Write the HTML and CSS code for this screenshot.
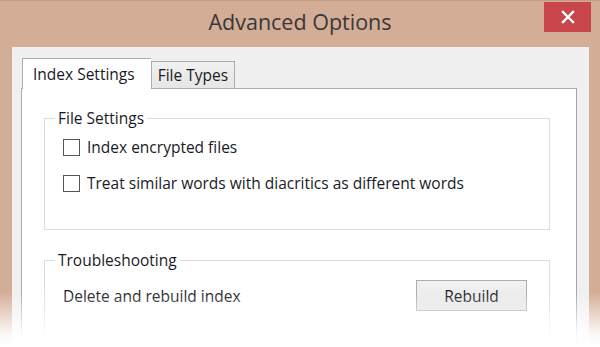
FILE: index.html
```html
<!DOCTYPE html>
<html>
<head>
<meta charset="utf-8">
<link rel="stylesheet" href="styles.css">
</head>
<body>
<div class="window">
  <div class="titlebar">
    <div></div>
    <div class="title">Advanced Options</div>
    <div class="close"><svg width="14" height="14" viewBox="0 0 14 14"><path d="M2 2L12 12M12 2L2 12" stroke="#fff" stroke-width="2.4" stroke-linecap="square"/></svg></div>
  </div>
  <div class="client">
    <div class="tabs">
      <div class="tab active">Index Settings</div>
      <div class="tab">File Types</div>
    </div>
    <div class="panel">
      <fieldset class="group group-files">
        <legend>File Settings</legend>
        <label class="check"><span class="box"></span>Index encrypted files</label>
        <label class="check"><span class="box"></span>Treat similar words with diacritics as different words</label>
      </fieldset>
      <fieldset class="group group-trouble">
        <legend>Troubleshooting</legend>
        <div class="row">
          <span>Delete and rebuild index</span>
          <button class="btn">Rebuild</button>
        </div>
      </fieldset>
    </div>
  </div>
  <div class="fade"></div>
</div>
</body>
</html>
```
FILE: styles.css
```css
html, body {
  margin: 0;
  padding: 0;
}
body {
  width: 600px;
  height: 347px;
  overflow: hidden;
  background: #d4ad96;
  font-family: "Open Sans", "Noto Sans", sans-serif;
  color: #1a1a26;
}
.window {
  position: relative;
  height: 347px;
  border-top: 1px solid #c49c86;
  box-sizing: border-box;
  overflow: hidden;
}
.titlebar {
  display: grid;
  grid-template-columns: 1fr auto 1fr;
  height: 46px;
}
.title {
  font-size: 21.5px;
  color: #383838;
  padding-top: 6px;
}
.close {
  justify-self: end;
  width: 47px;
  height: 30px;
  margin-top: 1px;
  margin-right: 9px;
  background: #c9464b;
  display: flex;
  align-items: center;
  justify-content: center;
}
.client {
  margin: 0 11px 0 12px;
  background: #f0f0f0;
  padding: 11px 12px 0 9px;
  height: 300px;
  box-sizing: border-box;
}
.tabs {
  display: flex;
  align-items: flex-end;
  height: 30px;
  position: relative;
  z-index: 1;
  margin-left: 1px;
}
.tab {
  font-size: 15.5px;
  height: 27px;
  box-sizing: border-box;
  border: 1px solid #acacac;
  border-bottom: none;
  background: linear-gradient(#f0f0f0, #e6e6e6);
  padding: 2px 6px 0 6px;
  line-height: 22px;
}
.tab.active {
  height: 31px;
  background: #fff;
  padding: 4px 16px 0 10px;
  margin-bottom: -1px;
  border-right: none;
}
.panel {
  background: #fff;
  border: 1px solid #acacac;
  border-right-color: #a6a6a6;
  height: 259px;
  padding: 20px 26px 0 22px;
  box-sizing: border-box;
}
.group {
  border: 1px solid #dcdcdc;
  margin: 0;
  padding: 0 0 0 18px;
  font-size: 15.5px;
}
.group legend {
  padding: 0 3px;
  margin-left: -8px;
  line-height: 18px;
}
.group-files {
  height: 121px;
  box-sizing: border-box;
  padding-top: 11px;
}
.check {
  display: flex;
  align-items: center;
  height: 18px;
  margin-bottom: 18px;
}
.box {
  width: 15px;
  height: 15px;
  border: 1px solid #555;
  background: #fff;
  margin-right: 7px;
  flex: none;
}
.group-trouble {
  margin-top: 21px;
  height: 80px;
  padding-top: 11px;
  padding-right: 22px;
}
.row {
  display: flex;
  justify-content: space-between;
  align-items: center;
}
.btn {
  width: 111px;
  height: 31px;
  border: 1px solid #adadad;
  background: linear-gradient(#f2f2f2, #e4e4e4);
  font-family: inherit;
  font-size: 15.5px;
  color: #1a1a26;
  padding: 0;
}
.fade {
  position: absolute;
  left: 0;
  right: 0;
  bottom: 0;
  height: 55px;
  background: linear-gradient(rgba(255,255,255,0), rgba(255,255,255,0.9) 75%, #fff);
  pointer-events: none;
}
```
